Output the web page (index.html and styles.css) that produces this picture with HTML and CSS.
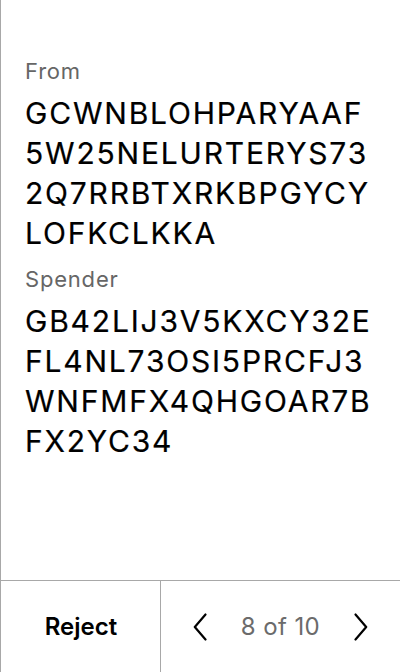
FILE: index.html
```html
<!DOCTYPE html>
<html>
<head>
<meta charset="utf-8">
<link rel="stylesheet" href="styles.css">
</head>
<body>
<div class="screen">
  <div class="content">
    <div class="field">
      <div class="label">From</div>
      <div class="value">GCWNBLOHPARYAAF<br>5W25NELURTERYS73<br>2Q7RRBTXRKBPGYCY<br>LOFKCLKKA</div>
    </div>
    <div class="field">
      <div class="label">Spender</div>
      <div class="value">GB42LIJ3V5KXCY32E<br>FL4NL73OSI5PRCFJ3<br>WNFMFX4QHGOAR7B<br>FX2YC34</div>
    </div>
  </div>
  <div class="footer">
    <div class="reject">Reject</div>
    <div class="pager">
      <svg class="chev" width="14" height="28" viewBox="0 0 14 28"><path d="M12.5 1.5 L1.8 14 L12.5 26.5" fill="none" stroke="#000" stroke-width="2.2" stroke-linecap="round" stroke-linejoin="round"/></svg>
      <span class="count">8 of 10</span>
      <svg class="chev" width="14" height="28" viewBox="0 0 14 28"><path d="M1.5 1.5 L12.2 14 L1.5 26.5" fill="none" stroke="#000" stroke-width="2.2" stroke-linecap="round" stroke-linejoin="round"/></svg>
    </div>
  </div>
</div>
</body>
</html>
```

FILE: styles.css
```css
* { box-sizing: border-box; }
html, body { margin: 0; padding: 0; background: #fff; }
body { font-family: Inter, "Noto Sans", sans-serif; color: #000; }
.screen {
  width: 400px;
  height: 672px;
  border-left: 1px solid #a8a8a8;
  display: flex;
  flex-direction: column;
}
.content {
  flex: 1;
  padding: 57px 0 0 24px;
  display: flex;
  flex-direction: column;
  gap: 12px;
}
.label {
  font-size: 22px;
  line-height: 28px;
  letter-spacing: 0.8px;
  color: #666;
  margin-bottom: 8px;
}
.value {
  font-size: 30px;
  line-height: 40px;
  letter-spacing: 1.8px;
  font-weight: 400;
  white-space: nowrap;
  -webkit-text-stroke: 0.2px #000;
}
.footer {
  height: 92px;
  border-top: 1px solid #a8a8a8;
  display: flex;
}
.reject {
  width: 160px;
  border-right: 1px solid #a8a8a8;
  display: flex;
  align-items: center;
  justify-content: center;
  font-size: 24px;
  font-weight: 600;
  padding-left: 1px;
}
.pager {
  flex: 1;
  display: flex;
  align-items: center;
  justify-content: center;
  gap: 34px;
}
.count {
  font-size: 24px;
  letter-spacing: 0.4px;
  color: #6b6b6b;
}
```
